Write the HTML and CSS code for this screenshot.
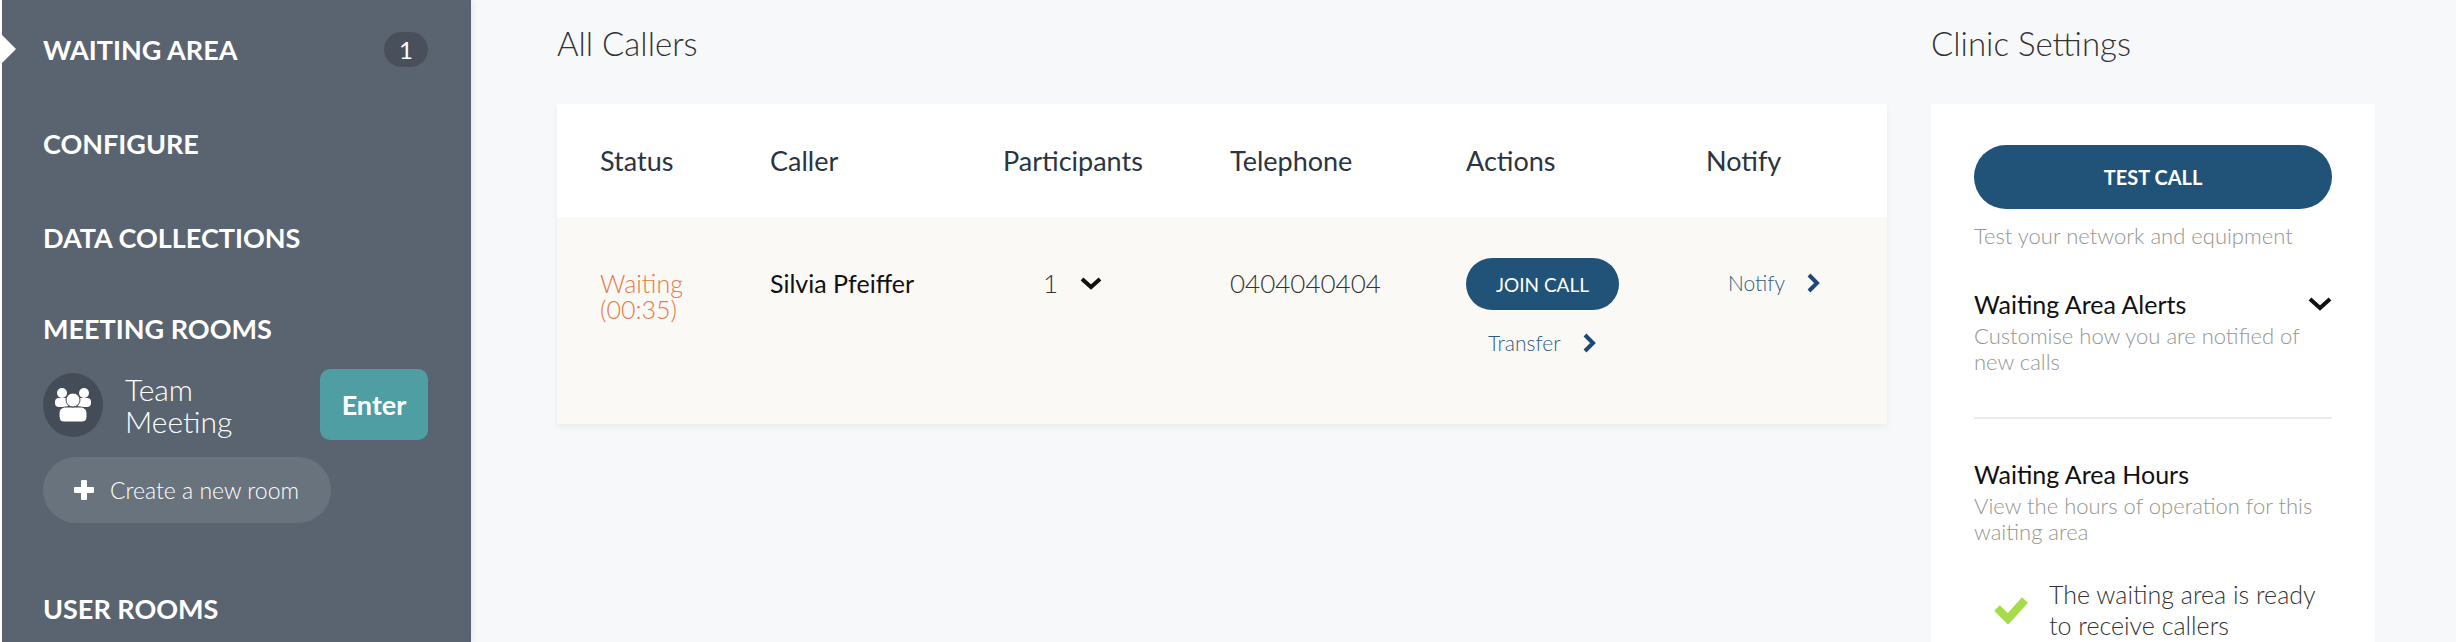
FILE: index.html
```html
<!DOCTYPE html>
<html lang="en">
<head>
  <meta charset="UTF-8">
  <meta name="viewport" content="width=device-width, initial-scale=1">
  <title>Waiting Area</title>
  <link rel="stylesheet" href="styles.css">
</head>
<body>
  <div class="app">
    <nav class="sidebar">
      <a class="nav-link active" href="#waiting">WAITING AREA <span class="count">1</span></a>
      <a class="nav-link" href="#configure">CONFIGURE</a>
      <a class="nav-link" href="#data">DATA COLLECTIONS</a>

      <h2 class="nav-heading">MEETING ROOMS</h2>
      <div class="room">
        <span class="room-icon">
          <svg viewBox="0 0 36 34" width="36" height="34" fill="#fff">
            <circle cx="7" cy="5" r="5"/>
            <circle cx="29" cy="5" r="5"/>
            <rect x="0" y="10" width="14" height="9" rx="4"/>
            <rect x="22" y="10" width="14" height="9" rx="4"/>
            <path d="M4 34V26c0-5 3-7 7-7h14c4 0 7 2 7 7v3c0 3-2 5-5 5H9c-3 0-5-2-5-5z" stroke="#444c57"/>
            <circle cx="18" cy="12" r="7" stroke="#444c57"/>
          </svg>
        </span>
        <span class="room-name">Team Meeting</span>
        <button type="button" class="enter-btn">Enter</button>
      </div>
      <button type="button" class="create-btn">
        <svg viewBox="0 0 22 22" width="22" height="22" fill="#fff">
          <path d="M9 1h4q1 0 1 1v6h6q1 0 1 1v4q0 1-1 1h-6v6q0 1-1 1H9q-1 0-1-1v-6H2q-1 0-1-1V9q0-1 1-1h6V2q0-1 1-1z"/>
        </svg>
        Create a new room
      </button>

      <h2 class="nav-heading users">USER ROOMS</h2>
    </nav>

    <main class="content">
      <section class="callers">
        <h1>All Callers</h1>
        <table>
          <colgroup>
            <col class="col-status">
            <col class="col-caller">
            <col class="col-participants">
            <col class="col-phone">
            <col class="col-actions">
            <col>
          </colgroup>
          <thead>
            <tr>
              <th>Status</th>
              <th>Caller</th>
              <th>Participants</th>
              <th>Telephone</th>
              <th>Actions</th>
              <th>Notify</th>
            </tr>
          </thead>
          <tbody>
            <tr>
              <td class="waiting">Waiting<br>(00:35)</td>
              <td class="name">Silvia Pfeiffer</td>
              <td>
                <button type="button" class="people-btn">1
                  <svg viewBox="0 0 22 14" width="22" height="14"><path d="M2 3l9 8 9-8" fill="none" stroke="#111" stroke-width="4"/></svg>
                </button>
              </td>
              <td>0404040404</td>
              <td class="actions">
                <button type="button" class="join-btn">JOIN CALL</button>
                <a class="row-link" href="#transfer">Transfer
                  <svg viewBox="0 0 14 20" width="14" height="20"><path d="M2 2l8 8-8 8" fill="none" stroke="#1d4877" stroke-width="4"/></svg>
                </a>
              </td>
              <td>
                <a class="row-link" href="#notify">Notify
                  <svg viewBox="0 0 14 20" width="14" height="20"><path d="M2 2l8 8-8 8" fill="none" stroke="#1d4877" stroke-width="4"/></svg>
                </a>
              </td>
            </tr>
          </tbody>
        </table>
      </section>

      <aside class="settings">
        <h1>Clinic Settings</h1>
        <div class="card">
          <button type="button" class="test-btn">TEST CALL</button>
          <p class="hint">Test your network and equipment</p>

          <button type="button" class="toggle">Waiting Area Alerts
            <svg viewBox="0 0 24 16" width="24" height="16"><path d="M2 3l10 9 10-9" fill="none" stroke="#111" stroke-width="4"/></svg>
          </button>
          <p class="hint">Customise how you are notified of new calls</p>

          <hr>

          <h3>Waiting Area Hours</h3>
          <p class="hint">View the hours of operation for this waiting area</p>
          <div class="ready">
            <svg viewBox="0 0 34 28" width="34" height="28"><path d="M3 12l11 11L31 4" fill="none" stroke="#a5dc4a" stroke-width="8"/></svg>
            <p>The waiting area is ready to receive callers</p>
          </div>
        </div>
      </aside>
    </main>
  </div>
</body>
</html>
```

FILE: styles.css
```css
* {
  box-sizing: border-box;
}
body {
  margin: 0;
  font-family: Lato, "Liberation Sans", sans-serif;
  font-size: 26px;
  font-weight: 300;
  color: #333;
  background: #f7f8fa;
}
h1, h2, h3, p {
  margin: 0;
}
button {
  font-family: inherit;
  border: none;
  cursor: pointer;
}
a {
  text-decoration: none;
}
svg {
  flex: none;
}
.app {
  display: flex;
  min-height: 100vh;
}

/* Sidebar */
.sidebar {
  position: relative;
  flex: none;
  width: 471px;
  padding: 31px 43px 16px 41px;
  border-left: 2px solid #fff;
  background: #5a6470;
  box-shadow: 0 0 8px rgba(0,0,0,0.1);
}
.nav-link, .nav-heading {
  display: flex;
  justify-content: space-between;
  align-items: center;
  height: 36px;
  margin-bottom: 58px;
  font-size: 27px;
  font-weight: bold;
  color: #fff;
}
.nav-link.active::before {
  content: "";
  position: absolute;
  left: 0;
  border: 14px solid transparent;
  border-left-color: #fff;
  border-right: none;
}
.count {
  width: 44px;
  border-radius: 18px;
  background: #49505b;
  font-size: 24px;
  font-weight: normal;
  line-height: 35px;
  text-align: center;
}
.nav-heading {
  margin: -3px 0 23px;
}
.nav-heading.users {
  margin: 67px 0 0;
}
.room {
  display: flex;
  align-items: center;
}
.room-icon {
  display: flex;
  flex: none;
  justify-content: center;
  align-items: center;
  width: 60px;
  height: 64px;
  border-radius: 50%;
  background: #444c57;
}
.room-name {
  flex: 1;
  margin: 0 72px 0 22px;
  font-size: 30px;
  line-height: 32px;
  color: #fff;
}
.enter-btn {
  width: 108px;
  height: 71px;
  padding: 0;
  border-radius: 10px;
  background: #4f9ea3;
  color: #fff;
  font-size: 27px;
  font-weight: bold;
}
.create-btn {
  display: flex;
  align-items: center;
  gap: 15px;
  height: 66px;
  margin-top: 17px;
  padding: 0 32px 0 30px;
  border-radius: 33px;
  background: #69737e;
  color: #fff;
  font-size: 23px;
  font-weight: 300;
}

/* Main area */
.content {
  display: flex;
  flex: 1;
  gap: 44px;
  padding: 0 81px 0 86px;
}
.callers {
  flex: 1;
}
h1 {
  padding: 23px 0 41px;
  font-size: 33px;
  font-weight: 300;
  line-height: 40px;
}
table {
  width: 100%;
  table-layout: fixed;
  border-collapse: collapse;
  background: #fff;
  box-shadow: 0 3px 6px rgba(0,0,0,0.05);
}
.col-status { width: 170px; }
.col-caller { width: 233px; }
.col-participants { width: 227px; }
.col-phone { width: 236px; }
.col-actions { width: 240px; }
th {
  height: 113px;
  padding: 0 0 0 43px;
  color: #2b3542;
  font-size: 27px;
  font-weight: normal;
  text-align: left;
}
td {
  height: 207px;
  padding: 53px 0 0 43px;
  background: #faf9f5;
  line-height: 26px;
  vertical-align: top;
}
.waiting {
  color: #e5794a;
  font-size: 25px;
}
.name {
  color: #111;
  font-size: 25px;
  font-weight: normal;
}
.people-btn {
  display: flex;
  align-items: center;
  gap: 22px;
  padding: 0 0 0 40px;
  background: none;
  color: #333;
  font-size: 26px;
  font-weight: 300;
  line-height: 26px;
}
.actions {
  padding-top: 41px;
}
.join-btn {
  display: block;
  width: 153px;
  height: 52px;
  margin-bottom: 20px;
  padding: 0;
  border-radius: 26px;
  background: #215277;
  color: #fff;
  font-size: 19px;
  font-weight: normal;
}
.row-link {
  display: flex;
  align-items: center;
  gap: 22px;
  padding-left: 22px;
  color: #2f5d85;
  font-size: 21px;
}

/* Clinic settings */
.settings {
  display: flex;
  flex-direction: column;
  flex: none;
  width: 444px;
}
.card {
  flex: 1;
  padding: 41px 43px 0;
  background: #fff;
}
.test-btn {
  width: 100%;
  height: 64px;
  margin-bottom: 14px;
  border-radius: 32px;
  background: #215277;
  color: #fff;
  font-size: 20px;
  font-weight: bold;
}
.hint {
  color: #96968f;
  font-size: 22px;
  line-height: 26px;
}
.toggle, h3 {
  padding: 0 0 3px;
  color: #111;
  font-size: 25px;
  font-weight: normal;
  line-height: 32px;
}
.toggle {
  display: flex;
  justify-content: space-between;
  align-items: center;
  width: 100%;
  margin-top: 39px;
  background: none;
}
hr {
  margin: 42px 0 39px;
  border: none;
  border-top: 2px solid #ebebeb;
}
.ready {
  display: flex;
  align-items: center;
  gap: 21px;
  margin-top: 34px;
  padding-left: 20px;
  font-size: 25px;
  line-height: 31px;
}
```
